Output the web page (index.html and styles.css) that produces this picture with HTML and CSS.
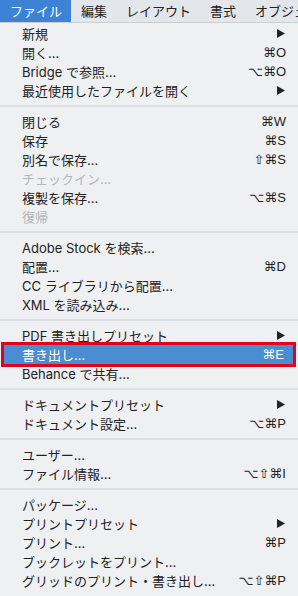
FILE: index.html
```html
<!DOCTYPE html>
<html lang="ja">
<head>
    <meta charset="UTF-8">
    <meta name="viewport" content="width=device-width, initial-scale=1.0">
    <title>ファイル メニュー</title>
    <link rel="stylesheet" href="styles.css">
</head>
<body>
    <div class="menubar">
        <span class="title active">ファイル</span>
        <span class="title">編集</span>
        <span class="title">レイアウト</span>
        <span class="title">書式</span>
        <span class="title">オブジェ</span>
    </div>

    <ul class="menu">
        <li class="item"><span>新規</span><svg class="arrow" width="8" height="9" viewBox="0 0 8 9"><polygon points="0,0 8,4.5 0,9"/></svg></li>
        <li class="item"><span>開く...</span><span class="keys">⌘O</span></li>
        <li class="item"><span>Bridge で参照...</span><span class="keys">⌥⌘O</span></li>
        <li class="item"><span>最近使用したファイルを開く</span><svg class="arrow" width="8" height="9" viewBox="0 0 8 9"><polygon points="0,0 8,4.5 0,9"/></svg></li>
        <li class="sep"></li>

        <li class="item"><span>閉じる</span><span class="keys">⌘W</span></li>
        <li class="item"><span>保存</span><span class="keys">⌘S</span></li>
        <li class="item"><span>別名で保存...</span><span class="keys">⇧⌘S</span></li>
        <li class="item disabled"><span>チェックイン...</span></li>
        <li class="item"><span>複製を保存...</span><span class="keys">⌥⌘S</span></li>
        <li class="item disabled"><span>復帰</span></li>
        <li class="sep"></li>

        <li class="item"><span>Adobe Stock を検索...</span></li>
        <li class="item"><span>配置...</span><span class="keys">⌘D</span></li>
        <li class="item"><span>CC ライブラリから配置...</span></li>
        <li class="item"><span>XML を読み込み...</span></li>
        <li class="sep"></li>

        <li class="item"><span>PDF 書き出しプリセット</span><svg class="arrow" width="8" height="9" viewBox="0 0 8 9"><polygon points="0,0 8,4.5 0,9"/></svg></li>
        <li class="item current"><span>書き出し...</span><span class="keys">⌘E</span></li>
        <li class="item"><span>Behance で共有...</span></li>
        <li class="sep"></li>

        <li class="item"><span>ドキュメントプリセット</span><svg class="arrow" width="8" height="9" viewBox="0 0 8 9"><polygon points="0,0 8,4.5 0,9"/></svg></li>
        <li class="item"><span>ドキュメント設定...</span><span class="keys">⌥⌘P</span></li>
        <li class="sep"></li>

        <li class="item"><span>ユーザー...</span></li>
        <li class="item"><span>ファイル情報...</span><span class="keys">⌥⇧⌘I</span></li>
        <li class="sep"></li>

        <li class="item"><span>パッケージ...</span></li>
        <li class="item"><span>プリントプリセット</span><svg class="arrow" width="8" height="9" viewBox="0 0 8 9"><polygon points="0,0 8,4.5 0,9"/></svg></li>
        <li class="item"><span>プリント...</span><span class="keys">⌘P</span></li>
        <li class="item"><span>ブックレットをプリント...</span></li>
        <li class="item"><span>グリッドのプリント・書き出し...</span><span class="keys">⌥⇧⌘P</span></li>
    </ul>
</body>
</html>
```

FILE: styles.css
```css
body {
    margin: 0;
    background: #eff0f2;
    font-family: "Inter", "Noto Sans CJK JP", sans-serif;
    color: #222;
    overflow: hidden;
}
.menubar {
    display: flex;
    height: 22px;
    background: #e3e6ea;
    border-bottom: 1px solid #cbced2;
    font-family: "Noto Sans CJK JP", sans-serif;
    font-size: 13px;
    line-height: 22px;
    white-space: nowrap;
    overflow: hidden;
}
.title {
    padding: 0 9px 0 10px;
}
.title.active {
    background: #3d83d5;
    color: #fff;
}
.menu {
    list-style: none;
    margin: 0;
    padding: 1px 0 0;
}
.item {
    display: flex;
    justify-content: space-between;
    align-items: center;
    height: 19px;
    padding: 0 12px 0 22px;
    font-size: 13px;
    white-space: nowrap;
}
.item.disabled {
    color: #b4b5b7;
}
.item.current {
    background: #4a8dd3;
    color: #fff;
    outline: 3px solid #e2001a;
    margin: 0 5px 0 4px;
    padding: 0 9px 0 18px;
}
.keys {
    font-family: "Liberation Sans", "DejaVu Sans", sans-serif;
    font-size: 13px;
}
.arrow {
    fill: #222;
    margin-right: 1px;
}
.sep {
    height: 2px;
    background: #dcdde0;
    margin: 5px 0;
}
```
